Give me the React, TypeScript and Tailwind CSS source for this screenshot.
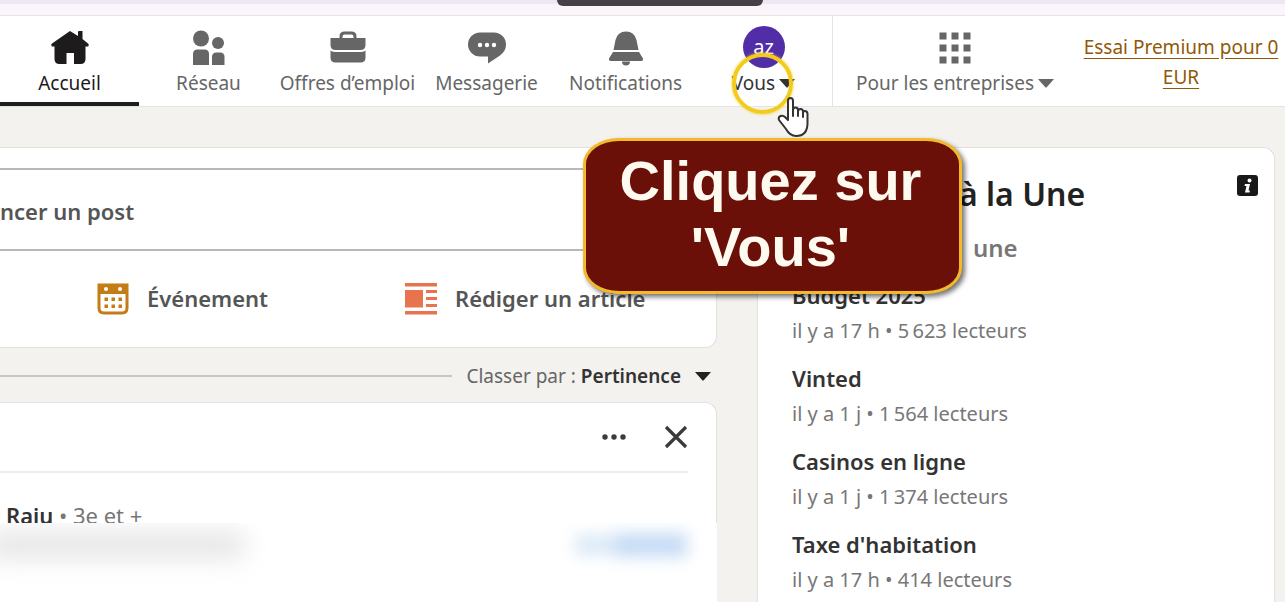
import type { ReactNode } from 'react';

function HomeIcon() {
  return (
    <svg viewBox="0 0 38 34" className="h-[34px] w-[38px]" fill="currentColor" aria-hidden="true">
      <path d="M19 0 L27 5 V1 Q27 0 28 0 H31.500 V8 L37 12.500 Q38.500 14 37 15.500 H34.500 V28 Q34.500 33 29.500 33 H23 V22 H15.500 V33 H8.500 Q3.500 33 3.500 28 V15.500 H1 Q-0.500 14 1 12.500 Z" />
    </svg>
  );
}

function NetworkIcon() {
  return (
    <svg viewBox="0 0 32 36" className="h-9 w-8" fill="currentColor" aria-hidden="true">
      <circle cx="8" cy="8.500" r="8" />
      <circle cx="25" cy="13" r="6" />
      <path d="M0 35V24q0-4.500 4.500-4.500h7q4.500 0 4.500 4.500v11zM19 35v-8q0-4.500 4.500-4.500h3.500q4.500 0 4.500 4.500v8z" />
    </svg>
  );
}

function JobsIcon() {
  return (
    <svg viewBox="0 0 36 34" className="h-[34px] w-9" fill="currentColor" aria-hidden="true">
      <path d="M9.500 7V5.500Q9.500 0.500 14.500 0.500h7q5 0 5 5V7H35.500v7q0 5-5 5h-25q-5 0-5-5V7zM12.500 7h11V5.500q0-2-2-2h-7q-2 0-2 2z" />
      <path d="M0.500 19.500q2 1.500 5 1.500h25q3 0 5-1.500V26.500q0 5-5 5h-25q-5 0-5-5z" />
    </svg>
  );
}

function MessageIcon() {
  return (
    <svg viewBox="0 0 38 32" className="h-8 w-[38px]" aria-hidden="true">
      <path fill="currentColor" d="M12 0.500h14a12 12 0 0 1 12 12q0 6.500-6 11L20 31.500v-7H12a12 12 0 0 1 0-24z" />
      <g fill="#fff">
        <circle cx="12" cy="13" r="2.200" />
        <circle cx="19" cy="13" r="2.200" />
        <circle cx="26" cy="13" r="2.200" />
      </g>
    </svg>
  );
}

function BellIcon() {
  return (
    <svg viewBox="0 0 36 35" className="h-[35px] w-9" fill="currentColor" aria-hidden="true">
      <path d="M5.500 19L7.500 9Q9.500 0.500 18 0.500T28.500 9l2 10zM5 21h26l4 6.500q0.500 2.500-2 2.500H3q-2.500 0-2-2.500zM14 30.500h8q0 4-4 4t-4-4z" />
    </svg>
  );
}

function GridIcon() {
  const cells = [0, 12, 24];
  return (
    <svg viewBox="0 0 32 32" className="size-8" fill="currentColor" aria-hidden="true">
      {cells.map((y) => cells.map((x) => <rect key={`${x}-${y}`} x={x + 0.5} y={y + 0.5} width="7" height="7" />))}
    </svg>
  );
}

function Caret() {
  return (
    <svg viewBox="0 0 16 9" className="h-[9px] w-4" fill="currentColor" aria-hidden="true">
      <path d="M0 0h16L8.500 8.500h-1z" />
    </svg>
  );
}

function CalendarIcon() {
  return (
    <svg viewBox="0 0 32 32" className="size-8" aria-hidden="true">
      <path fill="#c37d16" d="M0.500 0.500h31V25q0 6.500-6.500 6.500H7Q0.500 31.500 0.500 25z" />
      <path fill="#fff" d="M3.500 11h25v14q0 3.500-3.500 3.500H7q-3.500 0-3.500-3.500z" />
      <circle cx="9" cy="6" r="2" fill="#fff" />
      <circle cx="23" cy="6" r="2" fill="#fff" />
      <g fill="#c37d16">
        {[15, 22].map((y) => [8, 15, 22].map((x) => <rect key={`${x}-${y}`} x={x - 0.5} y={y - 0.5} width="3.500" height="3.500" />))}
      </g>
    </svg>
  );
}

function ArticleIcon() {
  return (
    <svg viewBox="0 0 32 32" className="size-8" fill="#e7734f" aria-hidden="true">
      <path d="M0 0h32v3.500H0zM0 28h32v3.500H0zM0 7h18v17.500H0zM21 7h11v3H21zM21 14h11v3H21zM21 21h11v3H21z" />
    </svg>
  );
}

function NavItem({ icon, label, active }: { icon: ReactNode; label: string; active?: boolean }) {
  const tone = active ? 'border-[#1d1f1c] text-[#1d1b1c]' : 'border-transparent text-[#666]';
  return (
    <a href="#" className={`flex w-[139px] shrink-0 flex-col items-center border-b-4 pt-3 ${tone}`}>
      <span className="flex h-10 items-center justify-center">{icon}</span>
      <span className="whitespace-nowrap text-[19px] leading-[30px]">{label}</span>
    </a>
  );
}

function Cursor() {
  return (
    <svg viewBox="0 0 32 42" className="absolute top-[96px] left-[777px] h-[42px] w-8" fill="#fff" stroke="#333" strokeWidth="2" strokeLinejoin="round" strokeLinecap="round" aria-hidden="true">
      <path d="M11 24V5q0-3 2.500-3T16 5v9q0-2.500 2.500-2.500T21 14v1.500q0-2.500 2.500-2.500T26 15.500V17q0-2 2-2t2.500 2.500V27Q30.500 40 19 40 13 40 9 33L2 24q-1-3 1.500-4T8 21z" />
      <path d="M16 14v6M21 15v5M26 17v4" />
    </svg>
  );
}

const news = [
  { title: 'Budget 2025', meta: 'il y a 17 h • 5\u202f623 lecteurs' },
  { title: 'Vinted', meta: 'il y a 1 j • 1\u202f564 lecteurs' },
  { title: 'Casinos en ligne', meta: 'il y a 1 j • 1\u202f374 lecteurs' },
  { title: "Taxe d'habitation", meta: 'il y a 17 h • 414 lecteurs' },
];

export default function App() {
  return (
    <div className="relative flex h-screen flex-col overflow-hidden bg-[#f4f2ee] font-['Noto_Sans',sans-serif] text-[#333]">
      <div className="h-[15px] shrink-0 border-t-4 border-[#ebe7f3] bg-[#fcf4fb]" />
      <div className="absolute top-0 left-[557px] h-[6px] w-[206px] rounded-b-lg bg-[#463f48]" />

      <nav className="flex h-[92px] shrink-0 border-y border-[#e6e3e4] bg-white">
        <NavItem icon={<HomeIcon />} label="Accueil" active />
        <NavItem icon={<NetworkIcon />} label="Réseau" />
        <NavItem icon={<JobsIcon />} label="Offres d’emploi" />
        <NavItem icon={<MessageIcon />} label="Messagerie" />
        <NavItem icon={<BellIcon />} label="Notifications" />
        <button type="button" className="flex w-[137px] shrink-0 flex-col items-center pt-[10px] text-[#333]">
          <span className="flex h-[42px] w-[42px] items-center justify-center rounded-full bg-[#512da8] text-[20px] text-white">az</span>
          <span className="flex items-center gap-1 text-[19px] leading-[30px]">
            Vous
            <Caret />
          </span>
        </button>
        <button type="button" className="flex w-[245px] shrink-0 flex-col items-center border-l border-[#e6e3e4] pt-3 text-[#666]">
          <span className="flex h-10 items-center"><GridIcon /></span>
          <span className="flex items-center gap-1 whitespace-nowrap text-[19px] leading-[30px]">
            Pour les entreprises
            <Caret />
          </span>
        </button>
        <a href="#" className="flex-1 pt-4 text-center text-[19px] leading-[30px] text-[#915907] underline underline-offset-4">
          Essai Premium pour 0<br />EUR
        </a>
      </nav>

      <div className="flex min-h-0 flex-1 gap-10 pt-10 pr-[10px]">
        <main className="flex min-w-0 flex-1 flex-col">
          <section className="flex h-[201px] shrink-0 flex-col rounded-r-xl border border-l-0 border-[#e3e0dd] bg-white pt-5">
            <button type="button" className="mr-8 h-[83px] rounded-r-full border-2 border-l-0 border-[#b8b8b8] pt-1 text-left text-[22px] font-semibold text-[#555]">
              ncer un post
            </button>
            <div className="flex flex-1 gap-[137px] pb-px pl-[97px] text-[22px] font-semibold text-[#555]">
              <button type="button" className="flex items-center gap-[18px]">
                <CalendarIcon />
                Événement
              </button>
              <button type="button" className="flex items-center gap-[18px]">
                <ArticleIcon />
                Rédiger un article
              </button>
            </div>
          </section>

          <div className="flex h-[54px] shrink-0 items-center gap-[14px] pt-[2px] pr-[6px] text-[19px]">
            <hr className="flex-1 border-t-2 border-[#c9c6c3]" />
            <button type="button" className="flex items-center gap-[14px] whitespace-nowrap text-[#666]">
              <span>Classer par : <span className="font-semibold text-[#333]">Pertinence</span></span>
              <span className="text-[#222]"><Caret /></span>
            </button>
          </div>

          <article className="flex flex-1 flex-col rounded-tr-xl border-t border-r border-[#e3e0dd] bg-white pr-7">
            <div className="flex h-[70px] shrink-0 items-center justify-end gap-[38px] border-b-2 border-[#ececec] text-[#3b3b3b]">
              <button type="button" aria-label="Plus">
                <svg viewBox="0 0 24 6" className="h-[6px] w-6" fill="currentColor">
                  <circle cx="3" cy="3" r="2.700" /><circle cx="12" cy="3" r="2.700" /><circle cx="21" cy="3" r="2.700" />
                </svg>
              </button>
              <button type="button" aria-label="Fermer">
                <svg viewBox="0 0 24 24" className="size-6" fill="none" stroke="currentColor" strokeWidth="3.200">
                  <path d="M2 2l20 20M22 2L2 22" />
                </svg>
              </button>
            </div>
            <p className="mt-[27px] h-[23px] shrink-0 overflow-hidden pl-[6px] text-[22px] leading-[30px] text-[#777]">
              <span className="font-semibold text-[#333]">Raju</span> • 3e et +
            </p>
            <div className="-mr-[29px] flex min-h-0 flex-1 justify-between overflow-hidden bg-white pt-2 pr-[30px]">
              <div className="-ml-3 h-7 w-[256px] bg-[#e6e6e6] blur-md" />
              <div className="flex h-7 items-center blur-sm">
                <div className="h-5 w-10 bg-[#dae9f6]" />
                <div className="h-6 w-[72px] bg-[#c6dbf5]" />
              </div>
            </div>
          </article>
        </main>

        <aside className="w-[518px] shrink-0 rounded-t-xl border border-b-0 border-[#e3e0dd] bg-white pt-[25px] pr-4 pl-[34px]">
          <div className="flex items-start justify-between pl-[167px]">
            <h2 className="text-[32px] leading-[42px] font-semibold text-[#222]">à la Une</h2>
            <button type="button" aria-label="Informations" className="mt-[2px]">
              <svg viewBox="0 0 21 21" className="size-[21px]">
                <rect width="21" height="21" rx="3" fill="#191919" />
                <circle cx="12.500" cy="5.500" r="2" fill="#fff" />
                <path d="M8 9h5l-1.500 6.500h1.500l-0.500 2H8L9.500 11H7.500z" fill="#fff" />
              </svg>
            </button>
          </div>
          <h3 className="pt-4 pl-[181px] text-[24px] leading-[34px] font-semibold text-[#777]">une</h3>
          <ul className="pt-[13px]">
            {news.map((item) => (
              <li key={item.title} className="h-[83px]">
                <a href="#" className="block">
                  <span className="block text-[22px] leading-[34px] font-semibold text-[#333]">{item.title}</span>
                  <span className="block text-[20px] leading-[38px] text-[#777]">{item.meta}</span>
                </a>
              </li>
            ))}
          </ul>
        </aside>
      </div>

      <div className="absolute top-[53px] left-[732px] size-[61px] rounded-full border-4 border-[#f3cb1d] shadow-[0_0_3px_#f3cb1d]" />
      <Cursor />
      <div role="tooltip" className="absolute top-[138px] left-[583px] h-[156px] w-[379px] rounded-[36px/26px] border-[3px] border-[#f2b92b] bg-[#6b0f09] pt-[7px] pr-1 text-center font-['Liberation_Sans',sans-serif] text-[56px] leading-[66px] font-bold text-[#fffaf0] shadow-[3px_3px_5px_rgba(0,0,0,0.55)]">
        Cliquez sur<br />'Vous'
      </div>
    </div>
  );
}
